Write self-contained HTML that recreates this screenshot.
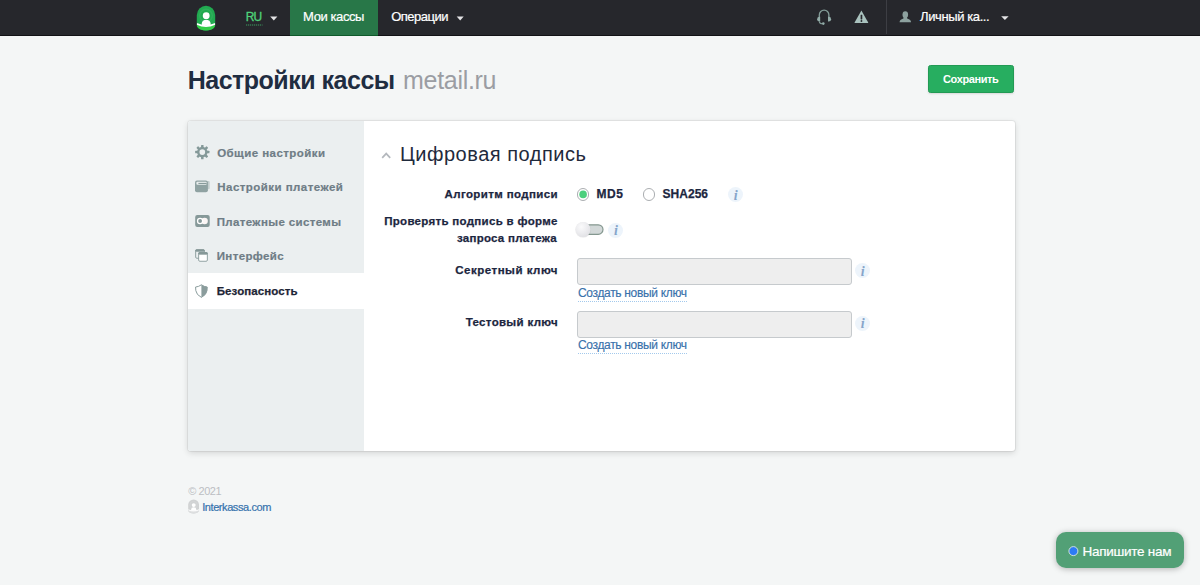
<!DOCTYPE html>
<html lang="ru">
<head>
<meta charset="utf-8">
<title>Настройки кассы</title>
<style>
*{box-sizing:border-box;margin:0;padding:0}
html,body{width:1200px;height:585px;overflow:hidden}
body{background:#f4f6f6;font-family:"Liberation Sans",sans-serif;color:#222;position:relative}
.tx{position:absolute;white-space:nowrap;line-height:1;z-index:5}
#kassy,#oper,#lk{-webkit-text-stroke:0.2px #fff}
#ru{-webkit-text-stroke:0.3px #4fd27a}
#chatt{-webkit-text-stroke:0.2px #fff}
#ik{-webkit-text-stroke:0.2px #3572ad}
#k1,#k2{-webkit-text-stroke:0.15px #3971ab}
#l1,#l2,#l3,#l4,#l5,#md5,#sha{-webkit-text-stroke:0.25px #1c2640}
#s1,#s2,#s3,#s4{-webkit-text-stroke:0.2px #6f7d86}
#s5{-webkit-text-stroke:0.25px #1e2536}
svg{position:absolute;overflow:visible}
#nav{position:absolute;left:0;top:0;width:1200px;height:35.5px;background:#26272c;border-bottom:1.5px solid #121216}
#navact{position:absolute;left:290.3px;top:0;width:88.1px;height:35.5px;background:#287748;border-bottom:1.5px solid #0f5a2b}
#navsep{position:absolute;left:886px;top:0;width:1px;height:34px;background:#3d3e44}
#save{position:absolute;left:928px;top:65px;width:86px;height:28px;background:#27ae60;border:1px solid #229a54;border-radius:2.5px;box-shadow:0 1px 2px rgba(0,0,0,.12)}
#panel{position:absolute;left:187.6px;top:120.6px;width:827.9px;height:330.3px;background:#fff;border-radius:3px;box-shadow:0 0 0 1px rgba(0,0,0,.055),0 2px 6px rgba(0,0,0,.14);overflow:hidden}
#side{position:absolute;left:0;top:0;width:176.4px;height:331px;background:#ebeff0}
#sideon{position:absolute;left:0;top:152.3px;width:176.4px;height:35.8px;background:#fff}
.inp{position:absolute;left:577.2px;width:274.4px;height:27px;background:#eee;border:1px solid #c6cacd;border-radius:3px}
.ul{position:absolute;left:578px;width:109px;height:0;border-top:1.2px dotted #a3c9ec}
.info{position:absolute;width:15.4px;height:15.4px;border-radius:50%;background:#edf4fb}
.info b{position:absolute;left:0.2px;top:0.9px;width:15.4px;height:15.4px;line-height:15.4px;text-align:center;color:#86a5ca;font-family:"Liberation Serif",serif;font-style:italic;font-weight:bold;font-size:14px}
.radio{position:absolute;width:12.4px;height:12.4px;border-radius:50%;border:1px solid #abaeb1;background:#fff}
#chat{position:absolute;left:1056.4px;top:532.3px;width:127.9px;height:35.7px;border-radius:10px;background:#52a076;box-shadow:0 1px 6px rgba(0,0,0,.28)}
#chatdot{display:none}

</style>
</head>
<body>
<div id="nav"></div>
<div id="navact"></div>
<div id="navsep"></div>
<div id="save"></div>
<div id="panel">
  <div id="side"></div>
  <div id="sideon"></div>
</div>
<div class="inp" style="top:257.9px"></div>
<div class="inp" style="top:310.5px"></div>
<div class="ul" style="top:300.5px"></div>
<div class="ul" style="top:353px"></div>
<div class="radio" style="left:576.9px;top:188.2px"></div>
<div class="radio" style="left:643px;top:188.2px"></div>
<div class="info" style="left:727.9px;top:186.7px"><b>i</b></div>
<div class="info" style="left:608.1px;top:222.6px"><b>i</b></div>
<div class="info" style="left:854.7px;top:263px"><b>i</b></div>
<div class="info" style="left:854.7px;top:315.5px"><b>i</b></div>
<div id="chat"></div>
<div id="chatdot"></div>

<svg id="icons" width="1200" height="585" viewBox="0 0 1200 585" style="left:0;top:0;z-index:4;pointer-events:none">
<defs><clipPath id="lgc"><path d="M196.8 15A9.2 9.2 0 0 1 215.2 15V24.5C215.2 28.2 211.5 30.6 206 30.6C200.5 30.6 196.8 28.2 196.8 24.5Z"/></clipPath></defs>
<!-- logo -->
<path d="M196.8 15A9.2 9.2 0 0 1 215.2 15V24.5C215.2 28.2 211.5 30.5 206 30.5C200.5 30.5 196.8 28.2 196.8 24.5Z" fill="#21aa50"/>
<path d="M196.8 24.6Q206 29.2 215.2 24.6C215.2 28.2 211.5 30.5 206 30.5C200.5 30.5 196.8 28.2 196.8 24.6Z" fill="#33cd47"/>
<circle cx="206" cy="15.6" r="6.3" fill="none" stroke="rgba(255,255,255,0.07)" stroke-width="1.4"/>
<path d="M196.8 23.1Q206 27.3 215.2 23.1L215.2 24.7Q206 29.2 196.8 24.7Z" fill="#fff" clip-path="url(#lgc)"/>
<path d="M201.8 25.8V23.6A4.4 3.9 0 0 1 210.6 23.6V25.8Z" fill="#fff"/>
<circle cx="206.2" cy="15.7" r="3.4" fill="#fff"/>
<!-- nav carets -->
<g fill="#e4e4e6">
<polygon points="270.2,16.6 277.4,16.6 273.8,20.5"/>
<polygon points="456.7,16.6 463.7,16.6 460.2,20.5"/>
<polygon points="1001.2,16.2 1008.6,16.2 1004.9,20.1"/>
</g>
<line x1="246.2" y1="25" x2="262.6" y2="25" stroke="#43b86c" stroke-width="1" stroke-dasharray="1 1"/>
<!-- headset -->
<g>
<path d="M819.3 17.2V15A4.8 4.9 0 0 1 828.9 15V17.2" fill="none" stroke="#829b97" stroke-width="1.3"/>
<path d="M820.2 16.7V21.6H819.6A2.5 2.45 0 0 1 819.6 16.7Z" fill="#93ada9"/>
<path d="M828 16.7V21.6H828.6A2.5 2.45 0 0 0 828.6 16.7Z" fill="#93ada9"/>
<path d="M819.2 21.3Q819.6 23.7 822.4 23.8" fill="none" stroke="#829b97" stroke-width="1.1"/>
<circle cx="823.3" cy="23.6" r="1.3" fill="#93ada9"/>
</g>
<!-- warning -->
<path d="M861.4 10.6L868.2 22.4Q868.5 23.1 867.7 23.1H855.1Q854.3 23.1 854.6 22.4Z" fill="#a9c2be"/>
<rect x="860.6" y="14.7" width="1.7" height="4.7" rx="0.4" fill="#26272c"/>
<circle cx="861.45" cy="21" r="0.95" fill="#26272c"/>
<!-- user -->
<g fill="#8da19f">
<ellipse cx="905.3" cy="14.7" rx="2.8" ry="3.4"/>
<path d="M899.6 22.2Q899.5 19.6 903.4 18.5L903.8 17H906.8L907.2 18.5Q911.1 19.6 911 22.2Z"/>
</g>
<!-- sidebar icons -->
<g fill="#849999"><rect x="201.05" y="144.95" width="2.5" height="3" rx="0.5" transform="rotate(0 202.3 152.1)"/><rect x="201.05" y="144.95" width="2.5" height="3" rx="0.5" transform="rotate(45 202.3 152.1)"/><rect x="201.05" y="144.95" width="2.5" height="3" rx="0.5" transform="rotate(90 202.3 152.1)"/><rect x="201.05" y="144.95" width="2.5" height="3" rx="0.5" transform="rotate(135 202.3 152.1)"/><rect x="201.05" y="144.95" width="2.5" height="3" rx="0.5" transform="rotate(180 202.3 152.1)"/><rect x="201.05" y="144.95" width="2.5" height="3" rx="0.5" transform="rotate(225 202.3 152.1)"/><rect x="201.05" y="144.95" width="2.5" height="3" rx="0.5" transform="rotate(270 202.3 152.1)"/><rect x="201.05" y="144.95" width="2.5" height="3" rx="0.5" transform="rotate(315 202.3 152.1)"/></g><circle cx="202.3" cy="152.1" r="4.05" fill="none" stroke="#849999" stroke-width="2.4"/>
<g>
<rect x="207" y="181" width="2.7" height="8.3" rx="1" fill="#c4cece"/>
<rect x="195" y="180.5" width="12.9" height="11.7" rx="2" fill="#8fa2a2"/>
<rect x="196.4" y="181.8" width="10.3" height="3" rx="1" fill="#e9eeee"/>
<line x1="198.4" y1="183.4" x2="206.7" y2="183.4" stroke="#7d9191" stroke-width="1"/>
</g>
<g>
<rect x="195.2" y="215.1" width="14.5" height="11.8" rx="2" fill="#869999"/>
<circle cx="204.6" cy="221" r="3.2" fill="#fbf6f5"/>
<circle cx="200.1" cy="221" r="3.2" fill="#fff"/>
<circle cx="200.1" cy="221" r="1.9" fill="#869999"/>
</g>
<g fill="none" stroke="#869999" stroke-width="0.9">
<rect x="195.65" y="249.75" width="8.7" height="8.5" rx="1.2"/>
<rect x="195.65" y="249.75" width="8.7" height="1.5" rx="0.6" fill="#869999"/>
<rect x="198.65" y="252.55" width="8.7" height="8.7" rx="1.2" fill="#fff"/>
<rect x="198.65" y="252.55" width="8.7" height="1.6" rx="0.6" fill="#869999"/>
</g>
<g>
<path d="M201.4 284.8Q204.3 286.9 207.2 287L207 290.6Q206.4 294.9 201.4 297.4Q196.4 294.9 195.8 290.6L195.6 287Q198.5 286.9 201.4 284.8Z" fill="#fff" stroke="#8a9c9c" stroke-width="1"/>
<path d="M201.4 284.8Q204.3 286.9 207.2 287L207 290.6Q206.4 294.9 201.4 297.4Z" fill="#8a9c9c"/>
</g>
<circle cx="583.1" cy="194.4" r="3.8" fill="#4ccf7d"/>
<circle cx="1073.4" cy="551.1" r="4.5" fill="#2d7bf5" stroke="#dfe9e0" stroke-width="0.9"/>
<!-- chevron -->
<path d="M382.2 157.8L386.2 153.6L390.2 157.8" fill="none" stroke="#b4b8bd" stroke-width="1.7"/>
<!-- toggle -->
<rect x="577.5" y="224.8" width="25.5" height="9.5" rx="4.75" fill="#d2d8d8" stroke="#84978f" stroke-width="1.2"/>
<circle cx="583.1" cy="229.8" r="7.9" fill="rgba(0,0,0,0.07)"/>
<circle cx="583.1" cy="229.6" r="7.5" fill="url(#kg)"/>
<defs><radialGradient id="kg" cx="0.38" cy="0.32" r="0.75"><stop offset="0" stop-color="#fafafb"/><stop offset="0.55" stop-color="#ececef"/><stop offset="1" stop-color="#dfdfe3"/></radialGradient></defs>
<!-- footer logo -->
<g transform="translate(188.2 499.5) scale(0.587 0.565) translate(-196.8 -5.8)">
<path d="M196.8 15A9.2 9.2 0 0 1 215.2 15V24.5C215.2 28.2 211.5 30.5 206 30.5C200.5 30.5 196.8 28.2 196.8 24.5Z" fill="#d0d2d3"/>
<path d="M196.8 24.6Q206 29.2 215.2 24.6C215.2 28.2 211.5 30.5 206 30.5C200.5 30.5 196.8 28.2 196.8 24.6Z" fill="#dcdedf"/>
<circle cx="206" cy="15.6" r="6.3" fill="none" stroke="rgba(255,255,255,0.1)" stroke-width="1.4"/>
<path d="M196.8 23.1Q206 27.3 215.2 23.1L215.2 24.7Q206 29.2 196.8 24.7Z" fill="#fff" clip-path="url(#lgc)"/>
<path d="M201.8 25.8V23.6A4.4 3.9 0 0 1 210.6 23.6V25.8Z" fill="#fff"/>
<circle cx="206.2" cy="15.7" r="3.4" fill="#fff"/>
</g>
</svg>

<div class="tx" id="ru" style="left:245.83px;top:11.31px;font-size:12px;font-weight:normal;color:#4fd27a;letter-spacing:-1.016px;">RU</div>
<div class="tx" id="kassy" style="left:303.09px;top:10.31px;font-size:13px;font-weight:normal;color:#fff;letter-spacing:-0.405px;">Мои кассы</div>
<div class="tx" id="oper" style="left:391.18px;top:10.31px;font-size:13px;font-weight:normal;color:#fff;letter-spacing:-0.510px;">Операции</div>
<div class="tx" id="lk" style="left:920.07px;top:10.31px;font-size:13px;font-weight:normal;color:#fff;letter-spacing:-0.399px;">Личный ка...</div>
<div class="tx" id="title" style="left:187.67px;top:68.01px;font-size:25px;font-weight:bold;color:#1f2d41;letter-spacing:-0.493px;">Настройки кассы</div>
<div class="tx" id="shop" style="left:403.00px;top:68.01px;font-size:25px;font-weight:normal;color:#9b9da3;letter-spacing:-0.292px;">metail.ru</div>
<div class="tx" id="savet" style="left:943.09px;top:74.21px;font-size:11px;font-weight:bold;color:#fff;letter-spacing:-0.399px;">Сохранить</div>
<div class="tx" id="s1" style="left:217.15px;top:148.00px;font-size:11.5px;font-weight:bold;color:#6f7d86;letter-spacing:0.444px;">Общие настройки</div>
<div class="tx" id="s2" style="left:217.29px;top:181.81px;font-size:11.5px;font-weight:bold;color:#6f7d86;letter-spacing:0.452px;">Настройки платежей</div>
<div class="tx" id="s3" style="left:216.70px;top:217.00px;font-size:11.5px;font-weight:bold;color:#6f7d86;letter-spacing:0.367px;">Платежные системы</div>
<div class="tx" id="s4" style="left:216.70px;top:251.31px;font-size:11.5px;font-weight:bold;color:#6f7d86;letter-spacing:0.369px;">Интерфейс</div>
<div class="tx" id="s5" style="left:216.74px;top:286.31px;font-size:11.5px;font-weight:bold;color:#1e2536;letter-spacing:0.104px;">Безопасность</div>
<div class="tx" id="h2" style="left:400.00px;top:144.31px;font-size:20px;font-weight:normal;color:#1f2a3c;letter-spacing:0.512px;">Цифровая подпись</div>
<div class="tx" id="l1" style="left:444.51px;top:188.71px;font-size:11.5px;font-weight:bold;color:#1c2640;letter-spacing:0.389px;">Алгоритм подписи</div>
<div class="tx" id="l2" style="left:384.16px;top:216.21px;font-size:11.5px;font-weight:bold;color:#1c2640;letter-spacing:0.305px;">Проверять подпись в форме</div>
<div class="tx" id="l3" style="left:457.04px;top:232.81px;font-size:11.5px;font-weight:bold;color:#1c2640;letter-spacing:0.248px;">запроса платежа</div>
<div class="tx" id="l4" style="left:455.31px;top:265.21px;font-size:11.5px;font-weight:bold;color:#1c2640;letter-spacing:0.502px;">Секретный ключ</div>
<div class="tx" id="l5" style="left:465.79px;top:317.21px;font-size:11.5px;font-weight:bold;color:#1c2640;letter-spacing:0.321px;">Тестовый ключ</div>
<div class="tx" id="md5" style="left:596.49px;top:188.00px;font-size:12px;font-weight:bold;color:#1c2640;letter-spacing:0.589px;">MD5</div>
<div class="tx" id="sha" style="left:662.57px;top:188.00px;font-size:12px;font-weight:bold;color:#1c2640;letter-spacing:0.022px;">SHA256</div>
<div class="tx" id="k1" style="left:577.93px;top:286.71px;font-size:12px;font-weight:normal;color:#3971ab;letter-spacing:-0.323px;">Создать новый ключ</div>
<div class="tx" id="k2" style="left:577.93px;top:339.21px;font-size:12px;font-weight:normal;color:#3971ab;letter-spacing:-0.323px;">Создать новый ключ</div>
<div class="tx" id="cp" style="left:188.13px;top:485.81px;font-size:11px;font-weight:normal;color:#bcbec3;letter-spacing:-0.424px;">© 2021</div>
<div class="tx" id="ik" style="left:202.15px;top:501.81px;font-size:11px;font-weight:normal;color:#3572ad;letter-spacing:-0.414px;">Interkassa.com</div>
<div class="tx" id="chatt" style="left:1082.47px;top:544.81px;font-size:13.5px;font-weight:normal;color:#fff;letter-spacing:-0.269px;">Напишите нам</div>
</body>
</html>
